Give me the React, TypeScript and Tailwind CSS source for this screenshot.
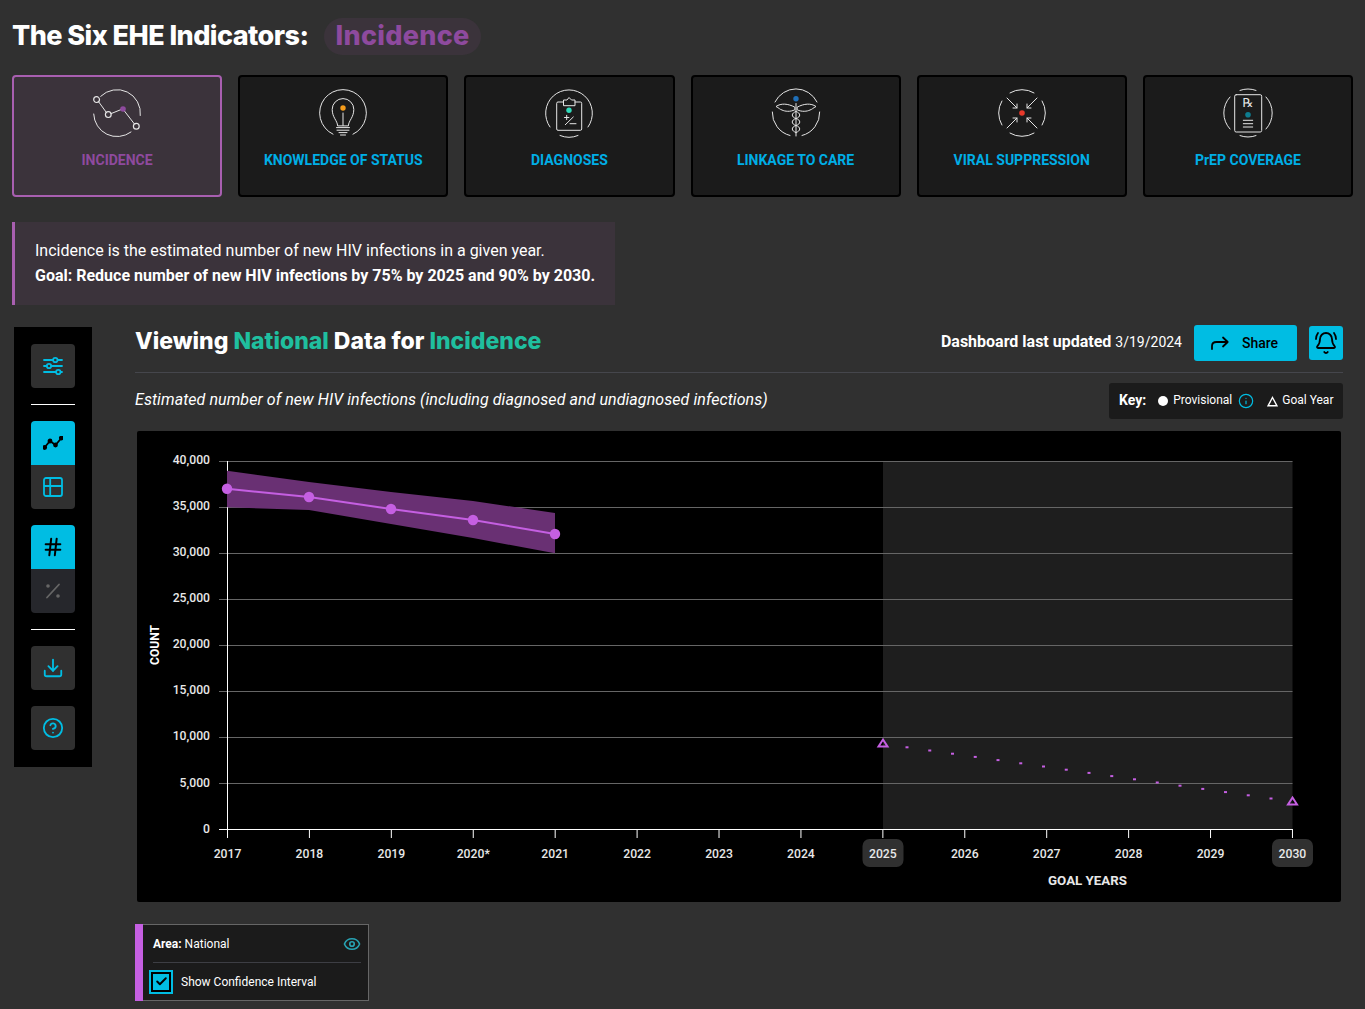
import { BellRing, Download, Eye, Hash, CircleHelp, Info, Check } from "lucide-react";

const heading = "font-['Inter',sans-serif]";
const years = ["2017", "2018", "2019", "2020*", "2021", "2022", "2023", "2024", "2025", "2026", "2027", "2028", "2029", "2030"];
const yLabels = ["40,000", "35,000", "30,000", "25,000", "20,000", "15,000", "10,000", "5,000", "0"];
const linePts = [[227, 488.7], [309, 497], [391, 509], [473, 520], [555, 534]];

function IconFrame({ children }: { children: React.ReactNode }) {
  return (
    <svg width="52" height="52" viewBox="-2 -2 52 52" fill="none" stroke="#e6e6e6" strokeWidth="1" strokeLinecap="round" strokeLinejoin="round">
      {children}
    </svg>
  );
}

const icons: Record<string, React.ReactNode> = {
  incidence: (
    <IconFrame>
      <path d="M7.7 7.3A23.4 23.4 0 0 1 47.3 26.5" />
      <path d="M0.7 25A23.4 23.4 0 0 0 38 43" />
      <path d="M5.5 12.6 13.6 23.8M17.6 24.8 28 20.6M31.4 22 41.6 35.2" />
      <circle cx="3.6" cy="10.6" r="2.9" strokeWidth="1.2" />
      <circle cx="15.3" cy="25.6" r="2.9" strokeWidth="1.2" />
      <circle cx="43.3" cy="37.3" r="2.9" strokeWidth="1.2" />
      <circle cx="30" cy="20" r="2.8" fill="#8e4a9e" stroke="none" />
    </IconFrame>
  ),
  knowledge: (
    <IconFrame>
      <path d="M14 45.2A23.4 23.4 0 1 1 34 45.2" />
      <path d="M18.6 36.5C18.4 31.5 13.2 28.5 13.2 20.4A10.8 10.8 0 0 1 34.8 20.4C34.8 28.5 29.6 31.5 29.4 36.5Z" />
      <path d="M24 24v12.5M17.5 38.6h13M18 41.2h12M20 43.6h8M21.5 46h5" />
      <circle cx="24" cy="19" r="2.7" fill="#f59c1a" stroke="none" />
    </IconFrame>
  ),
  diagnoses: (
    <IconFrame>
      <path d="M5 38A23.4 23.4 0 1 1 43 38" />
      <path d="M15 46.5A23.4 23.4 0 0 0 33 46.5" />
      <path d="M18.5 13H13a1.3 1.3 0 0 0-1.3 1.3V40a1.3 1.3 0 0 0 1.3 1.3h22.4a1.3 1.3 0 0 0 1.3-1.3V14.3a1.3 1.3 0 0 0-1.3-1.3H30" />
      <path d="M18.5 16.3V11h3.5L24 8.5 26.5 11H30v5.3Z" />
      <circle cx="24" cy="21.3" r="2.7" fill="#2fd9b9" stroke="none" />
      <path d="M20.3 35.7 28.3 28M19.5 28.5h4.4M21.7 26.3v4.4M25 34.7h6" />
    </IconFrame>
  ),
  linkage: (
    <IconFrame>
      <path d="M3 13A23.4 23.4 0 0 1 45 13" />
      <path d="M0.3 23A23.4 23.4 0 0 0 18 46.5M47.7 23A23.4 23.4 0 0 1 30 46.5" />
      <circle cx="24" cy="9.7" r="2.7" fill="#1f6fb8" stroke="none" />
      <path d="M24 14.5V47" />
      <path d="M22.5 18C16 14.5 9 14 4 17.5 7 19 8 20.5 10 21 13 22.5 18 23 22.5 21Z" />
      <path d="M25.5 18C32 14.5 39 14 44 17.5 41 19 40 20.5 38 21 35 22.5 30 23 25.5 21Z" />
      <path d="M24 22.5C29 24 29 28 24 29.5 19 31 19 35 24 36.5 29 38 29 42 24 43.5" />
      <path d="M24 22.5C19 24 19 28 24 29.5 29 31 29 35 24 36.5 19 38 19 42 24 43.5" />
    </IconFrame>
  ),
  viral: (
    <IconFrame>
      <path d="M12 3.9A23.4 23.4 0 0 1 36 3.9M12 44.1A23.4 23.4 0 0 0 36 44.1M3.9 12A23.4 23.4 0 0 0 3.9 36M44.1 12A23.4 23.4 0 0 1 44.1 36" />
      <path d="M9 9 19 19M19 15v4h-4M39 9 29 19M29 15v4h4M9 39 19 29M15 29h4v4M39 39 29 29M33 29h-4v4" />
      <circle cx="24" cy="24" r="2.8" fill="#e8392a" stroke="none" />
    </IconFrame>
  ),
  prep: (
    <IconFrame>
      <path d="M16 1.4A23.4 23.4 0 0 1 32 1.4M16 46.6A23.4 23.4 0 0 0 32 46.6M6 8A23.4 23.4 0 0 0 6 40M42 8A23.4 23.4 0 0 1 42 40" />
      <rect x="10.7" y="5.7" width="27" height="37.3" rx="1.5" />
      <text x="24" y="18" textAnchor="middle" fontSize="12" fontFamily="'DejaVu Sans',sans-serif" fill="#e6e6e6" stroke="none">℞</text>
      <circle cx="24" cy="25.7" r="2.8" fill="#0e7c8f" stroke="none" />
      <path d="M19.3 31.3h9.4M19.3 34.7h9.4M19.3 38h9.4" />
    </IconFrame>
  ),
};

const cards = [
  { key: "incidence", label: "INCIDENCE" },
  { key: "knowledge", label: "KNOWLEDGE OF STATUS" },
  { key: "diagnoses", label: "DIAGNOSES" },
  { key: "linkage", label: "LINKAGE TO CARE" },
  { key: "viral", label: "VIRAL SUPPRESSION" },
  { key: "prep", label: "PrEP COVERAGE" },
];

function IndicatorCard({ id, label }: { id: string; label: string }) {
  const active = id === "incidence";
  return (
    <div
      className={
        active
          ? "h-[122px] rounded-[4px] border-2 border-[#a85fb0] bg-[#3b333b] flex flex-col items-center pt-[10px]"
          : "h-[122px] rounded-[4px] border-2 border-black bg-[#1b1b1b] flex flex-col items-center pt-[10px]"
      }
    >
      {icons[id]}
      <span className={active ? "mt-[11px] text-sm font-bold leading-[20px] text-[#8e4a9e]" : "mt-[11px] text-sm font-bold leading-[20px] text-[#00aee6]"}>
        {label}
      </span>
    </div>
  );
}

function Sidebar() {
  return (
    <div className="w-[78px] h-[440px] bg-black mt-[2px] ml-[2px] shrink-0 flex flex-col items-center pt-[17px]">
      <button className="w-11 h-11 rounded-[4px] bg-[#303030] flex items-center justify-center">
        <svg width="20" height="20" viewBox="0 0 20 20" fill="none" stroke="#00bde3" strokeWidth="1.8" strokeLinecap="round">
          <path d="M1 4h9M15 4h4M1 10h2.5M8.5 10H19M1 16h12M18 16h1" />
          <circle cx="12.3" cy="4" r="2.2" />
          <circle cx="6" cy="10" r="2.2" />
          <circle cx="15.3" cy="16" r="2.2" />
        </svg>
      </button>
      <div className="w-11 h-px bg-white mt-4 mb-4" />
      <button className="w-11 h-11 rounded-t-[4px] bg-[#00bde3] flex items-center justify-center">
        <svg width="20" height="14" viewBox="0 0 20 14" fill="none" stroke="#000" strokeWidth="1.8">
          <path d="M1.5 11.5 7 5 12.5 9 18.5 2" />
          <circle cx="1.7" cy="11.5" r="1.5" fill="#000" />
          <circle cx="7" cy="5" r="1.5" fill="#000" />
          <circle cx="12.5" cy="9" r="1.5" fill="#000" />
          <circle cx="18.3" cy="2" r="1.5" fill="#000" />
        </svg>
      </button>
      <button className="w-11 h-11 rounded-b-[4px] bg-[#303030] flex items-center justify-center">
        <svg width="20" height="20" viewBox="0 0 20 20" fill="none" stroke="#00bde3" strokeWidth="1.8">
          <rect x="1" y="1" width="18" height="18" rx="2" />
          <path d="M1 9h18M7.2 1v18" />
        </svg>
      </button>
      <button className="w-11 h-11 rounded-t-[4px] bg-[#00bde3] mt-4 flex items-center justify-center">
        <Hash size={22} color="#000" strokeWidth={2.2} />
      </button>
      <button className="w-11 h-11 rounded-b-[4px] bg-[#26272c] flex items-center justify-center">
        <svg width="16" height="16" viewBox="0 0 16 16" fill="none" stroke="#666" strokeWidth="1.8" strokeLinecap="round">
          <path d="M14 1.5 2 14.5" />
          <circle cx="3" cy="3" r="1.8" fill="#666" stroke="none" />
          <circle cx="13" cy="13" r="1.8" fill="#666" stroke="none" />
        </svg>
      </button>
      <div className="w-11 h-px bg-white mt-4 mb-4" />
      <button className="w-11 h-11 rounded-[4px] bg-[#303030] flex items-center justify-center">
        <Download size={22} color="#00bde3" strokeWidth={2} />
      </button>
      <button className="w-11 h-11 rounded-[4px] bg-[#303030] mt-4 flex items-center justify-center">
        <CircleHelp size={22} color="#00bde3" strokeWidth={2} />
      </button>
    </div>
  );
}

function Chart() {
  const bandTop = "227,470.7 309,482 391,492 473,501 555,513";
  const bandBottom = "555,553.3 473,538 391,524 309,510 227,507.3";
  const dots = Array.from({ length: 17 }, (_, i) => ({ x: 907 + i * 22.75, y: 747.3 + i * 3.2 }));
  return (
    <div className="ml-[2px] w-[1204px] h-[471px] bg-black rounded-[2px]">
      <svg width="1204" height="471" viewBox="137 431 1204 471" fontFamily="'Roboto',sans-serif">
        <rect x="883" y="461" width="409.5" height="368" fill="#1e1e1e" />
        {yLabels.map((label, i) => {
          const y = 461.5 + i * 46;
          return (
            <g key={label}>
              {i < 8 && <line x1="219" x2="1292.5" y1={y} y2={y} stroke="#666" />}
              <text x="210" y={i > 6 ? y + 3 : y + 2} textAnchor="end" fontSize="12.2" fontWeight="500" fill="#e8e8e8">{label}</text>
            </g>
          );
        })}
        <line x1="227.5" x2="227.5" y1="461" y2="829" stroke="#fff" />
        <line x1="219" x2="1292.5" y1="829.5" y2="829.5" stroke="#fff" />
        <polygon points={`${bandTop} ${bandBottom}`} fill="#693073" />
        <polyline points={linePts.map((p) => p.join(",")).join(" ")} fill="none" stroke="#c55fe2" strokeWidth="2" />
        {linePts.map((p) => (
          <circle key={p[0]} cx={p[0]} cy={p[1]} r="5.2" fill="#c55fe2" />
        ))}
        {dots.map((d) => (
          <rect key={d.x} x={d.x - 1.5} y={d.y - 1} width="3" height="2" fill="#c55fe2" />
        ))}
        <polygon points="883,739.5 887.5,746.5 878.5,746.5" fill="none" stroke="#c55fe2" strokeWidth="2" />
        <polygon points="1292.5,797.5 1297,804.5 1288,804.5" fill="none" stroke="#c55fe2" strokeWidth="2" />
        <rect x="862.5" y="839" width="41" height="28" rx="7" fill="#303030" />
        <rect x="1272" y="839" width="41" height="28" rx="7" fill="#303030" />
        {years.map((year, i) => {
          const x = 227.5 + i * 81.92;
          return (
            <g key={year}>
              <line x1={x} x2={x} y1="829" y2="838" stroke="#fff" />
              <text x={x} y="858" textAnchor="middle" fontSize="12.2" fontWeight="500" fill="#e8e8e8">{year}</text>
            </g>
          );
        })}
        <text x="1087.5" y="885" textAnchor="middle" fontSize="13.3" fontWeight="700" fill="#e8e8e8">GOAL YEARS</text>
        <text x="159" y="645" textAnchor="middle" fontSize="12" fontWeight="700" fill="#fff" transform="rotate(-90 159 645)">COUNT</text>
      </svg>
    </div>
  );
}

export default function App() {
  return (
    <div className="min-h-[1009px] bg-[#303030] font-['Roboto',sans-serif] text-white px-3 pt-[18px] overflow-hidden">
      <div className="flex items-center h-[37px]">
        <h1 className={`${heading} text-[27px] font-extrabold tracking-[-0.55px]`}>The Six EHE Indicators:</h1>
        <span className={`${heading} ml-4 h-[37px] px-[11px] rounded-full bg-[#3b333b] text-[27px] font-extrabold tracking-[0.3px] leading-[35px] text-[#8e4a9e]`}>
          Incidence
        </span>
      </div>

      <div className="grid grid-cols-6 gap-4 mt-5">
        {cards.map((c) => (
          <IndicatorCard key={c.key} id={c.key} label={c.label} />
        ))}
      </div>

      <div className="mt-[25px] w-[603px] h-[83px] border-l-[3px] border-[#a85fb0] bg-[#3b333b] pl-5 pt-[16px] text-base leading-[25px]">
        <p>Incidence is the estimated number of new HIV infections in a given year.</p>
        <p className="font-bold">Goal: Reduce number of new HIV infections by 75% by 2025 and 90% by 2030.</p>
      </div>

      <div className="flex mt-5">
        <Sidebar />
        <div className="ml-[43px] w-[1208px]">
          <div className="flex items-center justify-between h-[48px] border-b border-[#45464c] pb-[12px]">
            <h2 className={`${heading} text-[23px] font-extrabold pb-[3px]`}>
              Viewing <span className="text-[#1fbf9f]">National</span> Data for <span className="text-[#1fbf9f]">Incidence</span>
            </h2>
            <div className="flex items-center">
              <span className="text-base font-bold pb-[2px]">Dashboard last updated</span>
              <span className="text-sm ml-1 pb-[2px]">3/19/2024</span>
              <button className="ml-3 w-[103px] h-9 rounded-[3px] bg-[#00bde3] flex items-center justify-center gap-[13px] text-black text-sm font-medium pr-[2px]">
                <svg width="18" height="14" viewBox="0 0 18 14" fill="none" stroke="#000" strokeWidth="1.8" strokeLinecap="round" strokeLinejoin="round">
                  <path d="M1 13V10C1 7.5 3 6 5.5 6H16.5M12 1.5 16.7 6 12 10.5" />
                </svg>
                Share
              </button>
              <button className="ml-3 w-[34px] h-[34px] rounded-[3px] bg-[#00bde3] flex items-center justify-center">
                <BellRing size={24} color="#000" strokeWidth={1.8} />
              </button>
            </div>
          </div>

          <div className="flex items-center justify-between mt-[10px] h-9">
            <p className="text-base italic tracking-[0.07px] pb-[2px]">Estimated number of new HIV infections (including diagnosed and undiagnosed infections)</p>
            <div className="h-9 w-[234px] rounded-[3px] bg-[#1b1b1b] flex items-center pl-[10px] text-xs">
              <span className="text-sm font-bold mr-3 pb-[2px]">Key:</span>
              <span className="w-[10px] h-[10px] rounded-full bg-white mr-[5px]" />
              <span className="pb-[2px]">Provisional</span>
              <Info size={16} color="#00bde3" strokeWidth={1.8} className="ml-[6px] mr-[13px]" />
              <svg width="11" height="11" viewBox="0 0 11 11" fill="none" stroke="#fff" strokeWidth="1.4" className="mr-[4px]">
                <polygon points="5.5,1.5 10,9.8 1,9.8" />
              </svg>
              <span className="pb-[2px]">Goal Year</span>
            </div>
          </div>

          <div className="mt-[12px]">
            <Chart />
          </div>

          <div className="mt-[22px] w-[234px] h-[77px] border border-[#666] border-l-0 bg-[#1b1b1b] flex">
            <div className="w-2 bg-[#c55fe2] shrink-0 -mt-px -mb-px" />
            <div className="flex-1 pl-[10px] pr-[7px]">
              <div className="flex items-center justify-between h-[38px] border-b border-[#3d3e44] text-xs">
                <span><b>Area:</b> National</span>
                <Eye size={18} color="#28a3b3" strokeWidth={2.2} />
              </div>
              <div className="flex items-center h-[37px] -ml-1 text-xs">
                <span className="w-6 h-6 border-2 border-[#00bde3] bg-black p-[2px] flex">
                  <span className="flex-1 bg-[#00bde3] flex items-center justify-center">
                    <Check size={13} color="#000" strokeWidth={3.5} />
                  </span>
                </span>
                <span className="ml-2">Show Confidence Interval</span>
              </div>
            </div>
          </div>
        </div>
      </div>
    </div>
  );
}
